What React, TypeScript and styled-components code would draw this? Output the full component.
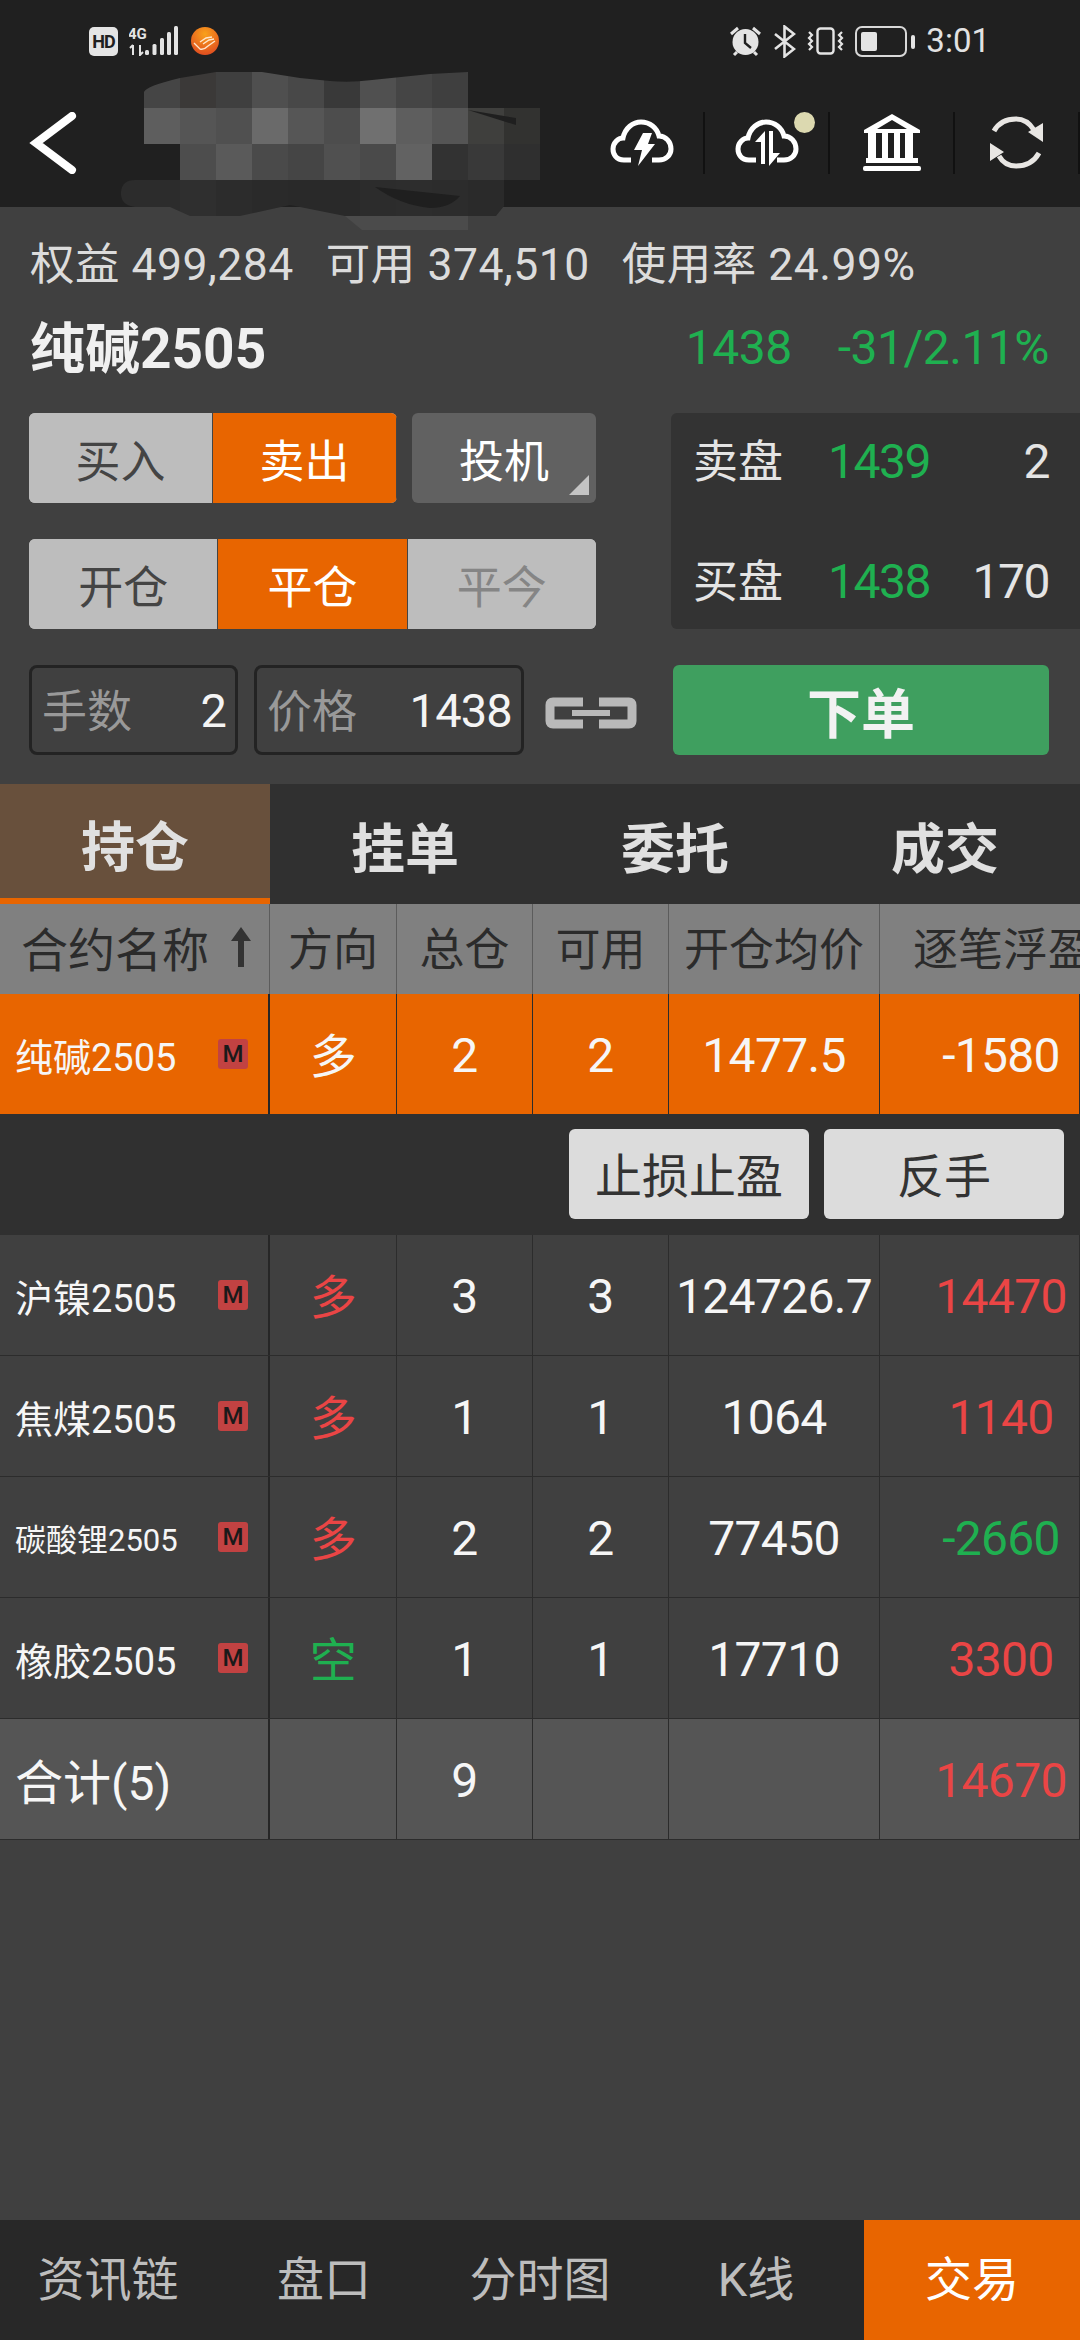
import styled, { createGlobalStyle } from "styled-components";

const GlobalStyle = createGlobalStyle`
  html, body {
    margin: 0;
    padding: 0;
    background: #404040;
  }
  * {
    box-sizing: border-box;
  }
`;

const ORANGE = "#e86500";
const GREEN = "#1fb050";
const RED = "#ea4545";

const Page = styled.div`
  position: relative;
  width: 1080px;
  height: 2340px;
  overflow: hidden;
  display: flex;
  flex-direction: column;
  background: #404040;
  color: #e0e0e0;
  font-family: Roboto, "Noto Sans CJK SC", sans-serif;
`;

const TopBar = styled.div`
  height: 207px;
  flex-shrink: 0;
  background: #202020;
`;
const StatusBar = styled.div`
  height: 78px;
  padding: 4px 90px 0 89px;
  display: flex;
  align-items: center;
  justify-content: space-between;
`;
const StatusGroup = styled.div`
  display: flex;
  align-items: center;
  gap: 11px;
`;
const HdBadge = styled.div`
  width: 29px;
  height: 29px;
  border-radius: 5px;
  background: #e4e4e4;
  color: #202020;
  font-size: 18px;
  font-weight: 700;
  line-height: 29px;
  text-align: center;
  letter-spacing: -1px;
`;
const Clock = styled.div`
  color: #e2e2e2;
  font-size: 33px;
  line-height: 36px;
`;
const NavBar = styled.div`
  height: 129px;
  display: flex;
  align-items: center;
  padding-left: 28px;
`;
const Spacer = styled.div`
  flex: 1;
`;
const IconCell = styled.div`
  position: relative;
  width: 125px;
  height: 62px;
  display: flex;
  align-items: center;
  justify-content: center;
  border-right: 2px solid #111;
`;
const NoticeDot = styled.span`
  position: absolute;
  top: 0;
  right: 13px;
  width: 21px;
  height: 21px;
  border-radius: 50%;
  background: #dcd9b0;
`;
const Mosaic = styled.svg`
  position: absolute;
  left: 120px;
  top: 60px;
`;

const InfoLine = styled.div`
  margin-top: 23px;
  height: 60px;
  padding-left: 30px;
  display: flex;
  align-items: center;
  gap: 32px;
  font-size: 44.5px;
  letter-spacing: 0.5px;
  color: #dcdcdc;
  white-space: pre;
`;
const TitleRow = styled.div`
  margin-top: 27px;
  height: 60px;
  padding: 0 31px 0 30px;
  display: flex;
  align-items: center;
  justify-content: space-between;
`;
const Title = styled.div`
  margin-top: -6px;
  font-size: 55px;
  font-weight: 700;
  color: #f0f0f0;
`;
const LastPrice = styled.div`
  display: flex;
  gap: 46px;
  font-size: 48px;
  letter-spacing: -0.5px;
  color: ${GREEN};
`;

const TradeArea = styled.div`
  margin-top: 36px;
  padding-left: 29px;
  display: flex;
  gap: 75px;
`;
const TradeButtons = styled.div`
  width: 567px;
  display: flex;
  flex-direction: column;
  gap: 36px;
`;
const ButtonRow = styled.div`
  display: flex;
  gap: 15px;
`;
const Segmented = styled.div<{ $width: number }>`
  width: ${(p) => p.$width}px;
  height: 90px;
  display: flex;
  border-radius: 6px;
  overflow: hidden;
  background: #bdbdbd;
`;
const Segment = styled.div<{ $active?: boolean; $disabled?: boolean }>`
  flex: 1;
  display: flex;
  align-items: center;
  justify-content: center;
  font-size: 45px;
  background: ${(p) => (p.$active ? ORANGE : "#bdbdbd")};
  color: ${(p) => (p.$active ? "#fff" : p.$disabled ? "#858585" : "#444")};
  border-right: ${(p) => (p.$active ? "1px solid #444" : "none")};
  border-left: ${(p) => (p.$active ? "1px solid #444" : "none")};
`;
const HedgeButton = styled.div`
  position: relative;
  width: 184px;
  height: 90px;
  display: flex;
  align-items: center;
  justify-content: center;
  border-radius: 6px;
  background: #616161;
  color: #fff;
  font-size: 45px;
  &::after {
    content: "";
    position: absolute;
    right: 7px;
    bottom: 8px;
    border-style: solid;
    border-width: 0 0 20px 20px;
    border-color: transparent transparent #c4c4c4 transparent;
  }
`;
const QuoteBox = styled.div`
  width: 409px;
  height: 216px;
  padding: 18px 31px 18px 22px;
  display: flex;
  flex-direction: column;
  justify-content: space-between;
  border-radius: 6px 0 0 6px;
  background: #333;
`;
const QuoteRow = styled.div`
  height: 60px;
  display: grid;
  grid-template-columns: 135px 1fr auto;
  align-items: center;
  font-size: 48px;
  letter-spacing: -1.5px;
  color: #e4e4e4;
`;
const QuoteLabel = styled.span`
  margin-top: -6px;
  font-size: 45px;
  letter-spacing: 0;
`;
const QuotePrice = styled.span`
  color: ${GREEN};
`;

const OrderRow = styled.div`
  margin-top: 36px;
  padding: 0 31px 0 29px;
  display: flex;
  align-items: center;
`;
const Field = styled.div<{ $width: number }>`
  width: ${(p) => p.$width}px;
  height: 90px;
  margin-right: 16px;
  padding: 0 9px 0 10px;
  display: flex;
  align-items: center;
  justify-content: space-between;
  border: 3px solid #232323;
  border-radius: 8px;
  font-size: 47px;
  letter-spacing: -0.8px;
  color: #f4f4f4;
`;
const FieldLabel = styled.span`
  margin-top: -4px;
  font-size: 45px;
  letter-spacing: 0;
  color: #999;
`;
const LinkWrap = styled.div`
  margin: 6px 36px 0 5px;
  flex-shrink: 0;
  line-height: 0;
`;
const SubmitButton = styled.div`
  flex: 1;
  height: 90px;
  display: flex;
  align-items: center;
  justify-content: center;
  border-radius: 6px;
  background: #3f9f5f;
  color: #f2f2f2;
  font-size: 54px;
  font-weight: 700;
`;

const Tabs = styled.div`
  margin-top: 29px;
  height: 120px;
  display: flex;
  background: #303030;
`;
const Tab = styled.div<{ $active?: boolean }>`
  width: 270px;
  display: flex;
  align-items: center;
  justify-content: center;
  padding-top: ${(p) => (p.$active ? "4px" : "3px")};
  font-size: 54px;
  font-weight: 700;
  color: #e0e0e0;
  background: ${(p) => (p.$active ? "#68503c" : "transparent")};
  border-bottom: ${(p) => (p.$active ? `6px solid ${ORANGE}` : "none")};
`;

const COLUMNS = "270px 127px 136px 136px 211px 200px";

const HeadRow = styled.div`
  height: 90px;
  display: grid;
  grid-template-columns: ${COLUMNS};
  background: #808080;
  color: #2b2b2b;
  font-size: 45px;
`;
const HeadCell = styled.div`
  display: flex;
  align-items: center;
  justify-content: center;
  padding-bottom: 5px;
  white-space: nowrap;
  border-right: 1px solid #5c5c5c;
`;
const HeadName = styled(HeadCell)`
  justify-content: flex-start;
  padding-left: 21px;
  gap: 21px;
  font-size: 47px;
`;
const HeadLast = styled(HeadCell)`
  justify-content: flex-start;
  padding-left: 33px;
  overflow: hidden;
  border-right: none;
`;

const Row = styled.div<{ $variant?: "selected" | "total" }>`
  height: ${(p) => (p.$variant === "selected" ? 120 : 121)}px;
  display: grid;
  grid-template-columns: ${COLUMNS};
  font-size: 48px;
  letter-spacing: -0.7px;
  color: #f6f6f6;
  background: ${(p) =>
    p.$variant === "selected" ? ORANGE : p.$variant === "total" ? "#555" : "#404040"};
  border-bottom: ${(p) => (p.$variant === "selected" ? "none" : "1px solid #2c2c2c")};
`;
const Cell = styled.div<{ $color?: string }>`
  display: flex;
  align-items: center;
  justify-content: center;
  padding-top: 3px;
  color: ${(p) => p.$color || "inherit"};
  border-right: 1px solid #2c2c2c;
`;
const SideCell = styled(Cell)`
  padding-top: 0;
  padding-bottom: 4px;
  font-size: 47px;
`;
const NameCell = styled(Cell)`
  justify-content: space-between;
  padding: 0 20px 0 15px;
  letter-spacing: 0;
  border-right: 2px solid #262626;
`;
const NameText = styled.span<{ $size?: number }>`
  font-size: ${(p) => p.$size || 38}px;
  white-space: nowrap;
`;
const TotalText = styled.span`
  font-size: 48px;
`;
const LastCell = styled(Cell)`
  padding-left: 43px;
`;
const MarketBadge = styled.span`
  width: 30px;
  height: 30px;
  border-radius: 3px;
  background: #c24242;
  color: #1a1a1a;
  font-size: 24px;
  font-weight: 500;
  line-height: 30px;
  text-align: center;
`;
const ActionRow = styled.div`
  height: 121px;
  padding: 15px 16px 0 0;
  display: flex;
  justify-content: flex-end;
  gap: 15px;
  background: #303030;
`;
const ActionButton = styled.div`
  width: 240px;
  height: 90px;
  padding-bottom: 4px;
  display: flex;
  align-items: center;
  justify-content: center;
  border-radius: 6px;
  background: #dcdcdc;
  color: #333;
  font-size: 47px;
`;

const BottomNav = styled.div`
  margin-top: auto;
  height: 120px;
  display: grid;
  grid-template-columns: repeat(5, 1fr);
  background: #282828;
`;
const NavItem = styled.div<{ $active?: boolean }>`
  display: flex;
  align-items: center;
  justify-content: center;
  padding-bottom: 9px;
  font-size: 47px;
  color: ${(p) => (p.$active ? "#fff" : "#bdbdbd")};
  background: ${(p) => (p.$active ? ORANGE : "transparent")};
`;

const SignalIcon = () => (
  <svg width="51" height="30" viewBox="0 0 51 30">
    <text x="-1" y="13" fontSize="15" fontWeight="700" fill="#e4e4e4" fontFamily="Roboto, sans-serif">
      4G
    </text>
    <path d="M4 19v10M1 22l3-3M11 19v10l3-3" stroke="#e4e4e4" strokeWidth="2" fill="none" />
    {[
      [16, 5],
      [23.5, 11],
      [31, 17],
      [38, 23],
      [45, 29],
    ].map(([x, h]) => (
      <rect key={x} x={x} y={29 - h} width="4" height={h} rx="1.5" fill="#e4e4e4" />
    ))}
  </svg>
);

const AppLogo = () => (
  <svg width="28" height="28" viewBox="0 0 28 28">
    <defs>
      <radialGradient id="logoFill" cx="50%" cy="25%" r="75%">
        <stop offset="0%" stopColor="#f9a11b" />
        <stop offset="100%" stopColor="#e04e20" />
      </radialGradient>
    </defs>
    <circle cx="14" cy="14" r="14" fill="url(#logoFill)" />
    <path
      d="M3 16l6 6c3 1 6-1 8-3l7-5M9 15l6-4 6-1M12 17l6-4 5-1"
      stroke="#ffe6cc"
      strokeWidth="1.4"
      fill="none"
    />
  </svg>
);

const AlarmIcon = () => (
  <svg width="33" height="31" viewBox="0 0 33 31">
    <circle cx="16.5" cy="16" r="13" fill="#e4e4e4" />
    <path d="M16 8v9l6 5" stroke="#202020" strokeWidth="2.4" fill="none" />
    <path d="M2 8l7-6M31 8l-7-6M5 29l3-3M28 29l-3-3" stroke="#e4e4e4" strokeWidth="3" fill="none" />
  </svg>
);

const BluetoothIcon = () => (
  <svg width="23" height="33" viewBox="0 0 23 33">
    <path d="M2 9l19 15-9.5 7.500V1.500L21 9 2 24" stroke="#e4e4e4" strokeWidth="2.6" fill="none" />
  </svg>
);

const VibrateIcon = () => (
  <svg width="37" height="28" viewBox="0 0 37 28">
    <rect x="10.500" y="1.500" width="16" height="25" rx="3" stroke="#e4e4e4" strokeWidth="2.4" fill="none" />
    <path
      d="M2 5l3 3-3 3 3 3-3 3 3 3-3 3M35 5l-3 3 3 3-3 3 3 3-3 3 3 3"
      stroke="#e4e4e4"
      strokeWidth="2.2"
      fill="none"
    />
  </svg>
);

const BatteryIcon = () => (
  <svg width="60" height="31" viewBox="0 0 60 31">
    <rect x="1" y="1" width="50" height="29" rx="6" stroke="#d8d8d8" strokeWidth="2" fill="none" />
    <rect x="6" y="6" width="16" height="19" rx="2" fill="#e4e4e4" />
    <rect x="56" y="9" width="4" height="14" rx="2" fill="#e4e4e4" />
  </svg>
);

const BackIcon = () => (
  <svg width="52" height="62" viewBox="0 0 52 62">
    <path d="M44 4L8 31l36 27" stroke="#fff" strokeWidth="8" strokeLinecap="round" fill="none" />
  </svg>
);

const CLOUD =
  "M14 41C6 41 3 35 3 30C3 24 8 19 13 19C15 9 23 3 31 3C40 3 47 9 49 17C56 17 61 23 61 30C61 36 56 41 49 41H42M14 41H21";

const CloudBoltIcon = () => (
  <svg width="64" height="48" viewBox="0 0 64 48">
    <path d={CLOUD} stroke="#fff" strokeWidth="5" fill="none" />
    <path d="M33 14h9l-4 11h7L28 47l4-16h-8z" fill="#fff" />
  </svg>
);

const CloudSwapIcon = () => (
  <svg width="64" height="48" viewBox="0 0 64 48">
    <path d={CLOUD} stroke="#fff" strokeWidth="5" fill="none" />
    <path d="M30 12v33h-4V23h-6zM34 12h4v22h7L34 47z" fill="#fff" />
  </svg>
);

const BankIcon = () => (
  <svg width="58" height="59" viewBox="0 0 58 59">
    <path fillRule="evenodd" d="M29 1l28 16v3H1v-3zM29 7L14 16h30z" fill="#fff" />
    <path d="M5 20h8v25H5zM19 20h6v25h-6zM31 20h6v25h-6zM42 20h8v25h-8zM3 45h52v5H3z" fill="#fff" />
    <rect x="0" y="53" width="58" height="5" rx="2" fill="#fff" />
  </svg>
);

const RefreshIcon = () => (
  <svg width="55" height="53" viewBox="0 0 55 53">
    <path
      d="M5 15C10 6 18 3 27 3C34 3 40 6 45 14M50 37C45 46 36 50 27 50C20 50 14 47 10 40"
      stroke="#e8e6e3"
      strokeWidth="5"
      fill="none"
    />
    <path d="M39 16l15-9v19zM1 27l14 9-14 9z" fill="#e8e6e3" />
  </svg>
);

const SortArrow = () => (
  <svg width="22" height="44" viewBox="0 0 22 44">
    <path d="M11 2L1 16h7v26h6V16h7z" fill="#333" />
  </svg>
);

// blurred-out account name, one row per 36px of the mosaic
const MOSAIC: (string | null)[][] = [
  ["#454545", "#3b3938", "#3f3f3f", "#4f4f4f", "#484848", "#393939", "#505050", "#454545", "#3f3f3f", null, null],
  ["#5e5e5e", "#555", "#505050", "#6a6a6a", "#565656", "#4d4d4d", "#707070", "#5e5e5e", "#555", "#3f3f3d", "#323230"],
  [null, "#4d4d4d", "#5a5a5a", "#4a4a4a", "#454545", "#505050", "#4a4a4a", "#626262", "#323232", "#393939", "#2f2f2f"],
  ["#2c2c2c", "#2f2f2f", "#2c2c2c", "#2a2a2a", "#292929", "#292929", "#2c2c2c", "#2d2d2d", "#2c2c2c", "#2a2a2a", null],
];

const AccountMosaic = () => (
  <Mosaic width="460" height="170" viewBox="120 60 460 170">
    <defs>
      <clipPath id="mosaicShape">
        <path d="M144 108V92Q146 86 180 78L216 72H262L300 78L330 81Q350 83 372 80L430 74L468 72V108H540V180H525L496 216H345L290 205L240 216L190 216L170 207H135Q120 205 121 192Q122 180 135 180H144Z" />
      </clipPath>
    </defs>
    <path d="M345 216L362 230H468V216z" fill="#4b4b4b" />
    <g clipPath="url(#mosaicShape)">
      {MOSAIC.map((cells, r) =>
        cells.map((fill, c) =>
          fill ? <rect key={`${r}-${c}`} x={144 + c * 36} y={72 + r * 36} width="36" height="36" fill={fill} /> : null
        )
      )}
      <rect x="120" y="180" width="24" height="36" fill="#2c2c2c" />
    </g>
    <path d="M375 187Q400 205 430 208Q450 208 460 196z" fill="#1f1f1f" />
    <path d="M468 110L516 125V118z" fill="#1f1f1f" />
  </Mosaic>
);

const LinkGlyph = () => (
  <svg width="92" height="32" viewBox="0 0 92 32">
    <path
      d="M38 5H8Q5 5 5 8V24Q5 27 8 27H38M54 5H84Q87 5 87 8V24Q87 27 84 27H54"
      stroke="#b9b9b9"
      strokeWidth="9"
      fill="none"
    />
    <path d="M27 16H65" stroke="#b9b9b9" strokeWidth="6" fill="none" />
  </svg>
);

type Position = {
  name: string;
  nameSize?: number;
  side: "多" | "空";
  total: number;
  free: number;
  price: string;
  pnl: string;
  pnlColor: string;
};

const POSITIONS: Position[] = [
  { name: "沪镍2505", side: "多", total: 3, free: 3, price: "124726.7", pnl: "14470", pnlColor: RED },
  { name: "焦煤2505", side: "多", total: 1, free: 1, price: "1064", pnl: "1140", pnlColor: RED },
  { name: "碳酸锂2505", nameSize: 31, side: "多", total: 2, free: 2, price: "77450", pnl: "-2660", pnlColor: GREEN },
  { name: "橡胶2505", side: "空", total: 1, free: 1, price: "17710", pnl: "3300", pnlColor: RED },
];

function App() {
  return (
    <Page>
      <GlobalStyle />
      <TopBar>
        <StatusBar>
          <StatusGroup>
            <HdBadge>HD</HdBadge>
            <SignalIcon />
            <AppLogo />
          </StatusGroup>
          <StatusGroup>
            <AlarmIcon />
            <BluetoothIcon />
            <VibrateIcon />
            <BatteryIcon />
            <Clock>3:01</Clock>
          </StatusGroup>
        </StatusBar>
        <NavBar>
          <BackIcon />
          <Spacer />
          <IconCell>
            <CloudBoltIcon />
          </IconCell>
          <IconCell>
            <CloudSwapIcon />
            <NoticeDot />
          </IconCell>
          <IconCell>
            <BankIcon />
          </IconCell>
          <IconCell>
            <RefreshIcon />
          </IconCell>
        </NavBar>
      </TopBar>
      <AccountMosaic />

      <InfoLine>
        <span>权益 499,284</span>
        <span>可用 374,510</span>
        <span>使用率 24.99%</span>
      </InfoLine>
      <TitleRow>
        <Title>纯碱2505</Title>
        <LastPrice>
          <span>1438</span>
          <span>-31/2.11%</span>
        </LastPrice>
      </TitleRow>

      <TradeArea>
        <TradeButtons>
          <ButtonRow>
            <Segmented $width={368}>
              <Segment>买入</Segment>
              <Segment $active>卖出</Segment>
            </Segmented>
            <HedgeButton>投机</HedgeButton>
          </ButtonRow>
          <Segmented $width={567}>
            <Segment>开仓</Segment>
            <Segment $active>平仓</Segment>
            <Segment $disabled>平今</Segment>
          </Segmented>
        </TradeButtons>
        <QuoteBox>
          <QuoteRow>
            <QuoteLabel>卖盘</QuoteLabel>
            <QuotePrice>1439</QuotePrice>
            <span>2</span>
          </QuoteRow>
          <QuoteRow>
            <QuoteLabel>买盘</QuoteLabel>
            <QuotePrice>1438</QuotePrice>
            <span>170</span>
          </QuoteRow>
        </QuoteBox>
      </TradeArea>

      <OrderRow>
        <Field $width={209}>
          <FieldLabel>手数</FieldLabel>
          <span>2</span>
        </Field>
        <Field $width={270}>
          <FieldLabel>价格</FieldLabel>
          <span>1438</span>
        </Field>
        <LinkWrap>
          <LinkGlyph />
        </LinkWrap>
        <SubmitButton>下单</SubmitButton>
      </OrderRow>

      <Tabs>
        <Tab $active>持仓</Tab>
        <Tab>挂单</Tab>
        <Tab>委托</Tab>
        <Tab>成交</Tab>
      </Tabs>

      <HeadRow>
        <HeadName>
          合约名称
          <SortArrow />
        </HeadName>
        <HeadCell>方向</HeadCell>
        <HeadCell>总仓</HeadCell>
        <HeadCell>可用</HeadCell>
        <HeadCell>开仓均价</HeadCell>
        <HeadLast>逐笔浮盈</HeadLast>
      </HeadRow>

      <Row $variant="selected">
        <NameCell>
          <NameText>纯碱2505</NameText>
          <MarketBadge>M</MarketBadge>
        </NameCell>
        <SideCell>多</SideCell>
        <Cell>2</Cell>
        <Cell>2</Cell>
        <Cell>1477.5</Cell>
        <LastCell>-1580</LastCell>
      </Row>
      <ActionRow>
        <ActionButton>止损止盈</ActionButton>
        <ActionButton>反手</ActionButton>
      </ActionRow>

      {POSITIONS.map((item) => (
        <Row key={item.name}>
          <NameCell>
            <NameText $size={item.nameSize}>{item.name}</NameText>
            <MarketBadge>M</MarketBadge>
          </NameCell>
          <SideCell $color={item.side === "多" ? RED : GREEN}>{item.side}</SideCell>
          <Cell>{item.total}</Cell>
          <Cell>{item.free}</Cell>
          <Cell>{item.price}</Cell>
          <LastCell $color={item.pnlColor}>{item.pnl}</LastCell>
        </Row>
      ))}
      <Row $variant="total">
        <NameCell>
          <TotalText>合计(5)</TotalText>
        </NameCell>
        <Cell />
        <Cell>9</Cell>
        <Cell />
        <Cell />
        <LastCell $color={RED}>14670</LastCell>
      </Row>

      <BottomNav>
        <NavItem>资讯链</NavItem>
        <NavItem>盘口</NavItem>
        <NavItem>分时图</NavItem>
        <NavItem>K线</NavItem>
        <NavItem $active>交易</NavItem>
      </BottomNav>
    </Page>
  );
}

export default App;
